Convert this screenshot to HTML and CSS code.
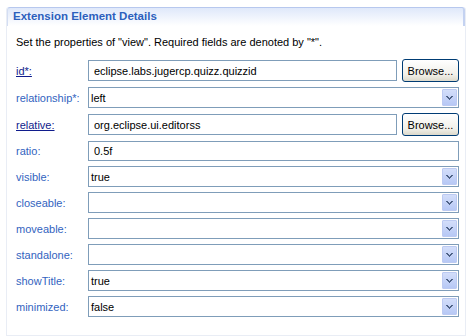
FILE: index.html
```html
<!DOCTYPE html>
<html lang="en">
<head>
    <meta charset="UTF-8">
    <title>Extension Element Details</title>
    <link rel="stylesheet" href="styles.css">
</head>
<body>
    <div class="section">
        <div class="section-title">Extension Element Details</div>
        <p class="description">Set the properties of "view". Required fields are denoted by "*".</p>

        <div class="form">
            <a class="label link" href="#">id*:</a>
            <div class="field-row">
                <input class="text" type="text" value="eclipse.labs.jugercp.quizz.quizzid" readonly>
                <button class="browse">Browse...</button>
            </div>

            <span class="label">relationship*:</span>
            <div class="combo"><span>left</span><span class="arrow"><svg width="7" height="4" viewBox="0 0 7 4"><path d="M0 0h2v1h1v1h1V1h1V0h2v1H6v1H5v1H4v1H3V3H2V2H1V1H0z" fill="#4d6185"/></svg></span></div>

            <a class="label link" href="#">relative:</a>
            <div class="field-row">
                <input class="text" type="text" value="org.eclipse.ui.editorss" readonly>
                <button class="browse">Browse...</button>
            </div>

            <span class="label">ratio:</span>
            <input class="text wide" type="text" value="0.5f" readonly>

            <span class="label">visible:</span>
            <div class="combo"><span>true</span><span class="arrow"><svg width="7" height="4" viewBox="0 0 7 4"><path d="M0 0h2v1h1v1h1V1h1V0h2v1H6v1H5v1H4v1H3V3H2V2H1V1H0z" fill="#4d6185"/></svg></span></div>

            <span class="label">closeable:</span>
            <div class="combo"><span></span><span class="arrow"><svg width="7" height="4" viewBox="0 0 7 4"><path d="M0 0h2v1h1v1h1V1h1V0h2v1H6v1H5v1H4v1H3V3H2V2H1V1H0z" fill="#4d6185"/></svg></span></div>

            <span class="label">moveable:</span>
            <div class="combo"><span></span><span class="arrow"><svg width="7" height="4" viewBox="0 0 7 4"><path d="M0 0h2v1h1v1h1V1h1V0h2v1H6v1H5v1H4v1H3V3H2V2H1V1H0z" fill="#4d6185"/></svg></span></div>

            <span class="label">standalone:</span>
            <div class="combo"><span></span><span class="arrow"><svg width="7" height="4" viewBox="0 0 7 4"><path d="M0 0h2v1h1v1h1V1h1V0h2v1H6v1H5v1H4v1H3V3H2V2H1V1H0z" fill="#4d6185"/></svg></span></div>

            <span class="label">showTitle:</span>
            <div class="combo"><span>true</span><span class="arrow"><svg width="7" height="4" viewBox="0 0 7 4"><path d="M0 0h2v1h1v1h1V1h1V0h2v1H6v1H5v1H4v1H3V3H2V2H1V1H0z" fill="#4d6185"/></svg></span></div>

            <span class="label">minimized:</span>
            <div class="combo"><span>false</span><span class="arrow"><svg width="7" height="4" viewBox="0 0 7 4"><path d="M0 0h2v1h1v1h1V1h1V0h2v1H6v1H5v1H4v1H3V3H2V2H1V1H0z" fill="#4d6185"/></svg></span></div>
        </div>
    </div>
</body>
</html>
```

FILE: styles.css
```css
* {
    margin: 0;
    padding: 0;
    box-sizing: border-box;
    font-family: "Liberation Sans", Arial, sans-serif;
    font-size: 11px;
}

body {
    background: #ffffff;
    color: #000000;
    padding: 7px 3px 0 6px;
}

.section {
    height: 329px;
    border: 1px solid #e9edf5;
    border-top: none;
    border-radius: 3px 3px 0 0;
}

.section-title {
    height: 19px;
    padding: 2px 0 0 5px;
    font-size: 11.5px;
    font-weight: bold;
    color: #2c5fbd;
    background: linear-gradient(#dfe8fa, #ffffff);
    border-top: 1px solid #b7c8ee;
    border-left: 1px solid #d4def3;
    border-right: 2px solid #c4d2f1;
    border-radius: 3px 3px 0 0;
}

.description {
    padding: 10px 0 0 9px;
    height: 33px;
}

.form {
    display: grid;
    grid-template-columns: 72px 371px;
    row-gap: 5px;
    align-items: center;
    padding-left: 9px;
}

.label {
    color: #3263c0;
}

.link {
    color: #101c8c;
    text-decoration: underline;
}

.field-row {
    display: flex;
    align-items: center;
    gap: 5px;
}

.text {
    height: 21px;
    width: 309px;
    padding: 0 5px;
    border: 1px solid #7f9db9;
    background: #ffffff;
    color: #000000;
    outline: none;
}

.text.wide {
    width: 371px;
    height: 20px;
}

.browse {
    width: 57px;
    height: 23px;
    border: 1px solid #003c74;
    border-radius: 3px;
    background: linear-gradient(#ffffff, #f1f0e9 70%, #dcd9cb);
    color: #000000;
    padding-top: 1px;
}

.combo {
    height: 21px;
    display: flex;
    align-items: center;
    justify-content: space-between;
    padding: 1px 1px 1px 2px;
    border: 1px solid #7f9db9;
}

.arrow {
    width: 15px;
    height: 17px;
    display: flex;
    align-items: center;
    justify-content: center;
    border: 1px solid #bccaf2;
    border-radius: 1px;
    background: linear-gradient(#d3defa, #b7c8f5);
}
```
